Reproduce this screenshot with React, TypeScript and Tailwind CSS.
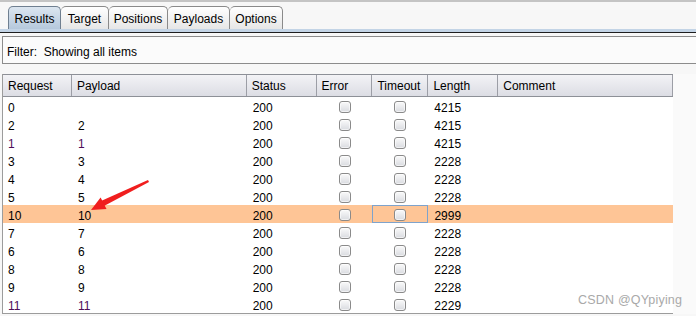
import React from "react";

const cols = [
  { name: "Request", w: 69 },
  { name: "Payload", w: 175 },
  { name: "Status", w: 70 },
  { name: "Error", w: 56 },
  { name: "Timeout", w: 56 },
  { name: "Length", w: 70 },
  { name: "Comment", w: 175 },
];

const rows: { r: string; p: string; len: string; purple?: boolean; hl?: boolean }[] = [
  { r: "0", p: "", len: "4215" },
  { r: "2", p: "2", len: "4215" },
  { r: "1", p: "1", len: "4215", purple: true },
  { r: "3", p: "3", len: "2228" },
  { r: "4", p: "4", len: "2228" },
  { r: "5", p: "5", len: "2228" },
  { r: "10", p: "10", len: "2999", hl: true },
  { r: "7", p: "7", len: "2228" },
  { r: "6", p: "6", len: "2228" },
  { r: "8", p: "8", len: "2228" },
  { r: "9", p: "9", len: "2228" },
  { r: "11", p: "11", len: "2229", purple: true },
];

const tabs = ["Results", "Target", "Positions", "Payloads", "Options"];
const tabW = [53, 48, 59, 62, 53];

function Check() {
  return (
    <div className="w-[12px] h-[12px] rounded-[3px] border border-[#8a8a8a] bg-gradient-to-b from-[#fafafa] to-[#d9dbe0] shadow-[inset_0_0_0_1px_rgba(255,255,255,0.6)]" />
  );
}

export default function App() {
  return (
    <div
      className="relative w-[696px] h-[316px] overflow-hidden bg-[#f7f7f7] text-[12px] text-black"
      style={{ fontFamily: '"Liberation Sans", Arial, sans-serif' }}
    >
      <div className="h-[2px] bg-[#c4c4c4]" />
      {/* tabs */}
      <div className="flex pl-[8px] h-[27px] items-end">
        {tabs.map((t, i) => (
          <div
            key={t}
            style={{ width: tabW[i] }}
            className={
              "h-[23px] pt-[2px] flex items-center justify-center rounded-t-[5px] border border-b-0 " +
              (i === 0
                ? "border-[#6f7f90] bg-gradient-to-b from-[#dce6f0] to-[#b5c8dc] relative z-10"
                : "border-[#8a8a8a] border-l-0 bg-gradient-to-b from-[#ffffff] to-[#e6e6e6]")
            }
          >
            {t}
          </div>
        ))}
      </div>
      <div className="h-[3px] bg-[#c3d4e6]" />
      <div className="h-[1px] bg-[#1e1e1e]" />
      {/* filter */}
      <div className="mt-[3px] ml-[2px] h-[28px] pt-[3px] border border-r-0 border-[#8c8c8c] bg-[#fbfbfb] flex items-center pl-[4px]">
        Filter:&nbsp; Showing all items
      </div>
      {/* table */}
      <div className="mt-[10px] flex">
        <div className="ml-[2px] w-[671px] h-[240px] border-l border-b border-[#9c9c9c] bg-white">
          <div className="flex h-[23px] border-t border-b border-[#8d9097] bg-gradient-to-b from-[#f3f3f6] to-[#dcdde4]">
            {cols.map((c) => (
              <div
                key={c.name}
                style={{ width: c.w }}
                className="h-full flex items-center pl-[5px] border-r border-[#9c9ea6]"
              >
                {c.name}
              </div>
            ))}
          </div>
          {rows.map((row) => (
            <div
              key={row.r}
              className={
                "flex h-[18px] items-center " +
                (row.hl ? "bg-[#fec596] " : "") +
                (row.purple ? "text-[#4e0d58]" : "text-black")
              }
            >
              <div className="w-[69px] pl-[5px] pt-[3px]">{row.r}</div>
              <div className="w-[175px] pl-[6px] pt-[3px]">{row.p}</div>
              <div className="w-[70px] pl-[6px] pt-[3px] text-black">200</div>
              <div className="w-[56px] flex justify-center pt-[2px]">
                <Check />
              </div>
              <div
                className={
                  "w-[56px] h-[18px] pt-[1px] flex items-center justify-center " +
                  (row.hl ? "border border-[#7ea3cc]" : "")
                }
              >
                <Check />
              </div>
              <div className="w-[70px] pl-[6px] pt-[3px] text-black">{row.len}</div>
              <div className="w-[175px]" />
            </div>
          ))}
        </div>
        <div className="flex-1 bg-[#fafafa]" />
      </div>
      {/* red arrow */}
      <svg className="absolute left-0 top-0 pointer-events-none" width="696" height="316">
        <polygon points="148,180 149,182 104,206 101,201" fill="#f01e1e" />
        <polygon points="91,210 100.6,197.5 106.5,209" fill="#f01e1e" />
      </svg>
      {/* watermark */}
      <div
        className="absolute left-[578px] top-[291px] text-[12.5px] text-[#a9a9a9] tracking-[0.2px]"
        style={{ fontFamily: '"Liberation Sans", Arial, sans-serif' }}
      >
        CSDN @QYpiying
      </div>
    </div>
  );
}
